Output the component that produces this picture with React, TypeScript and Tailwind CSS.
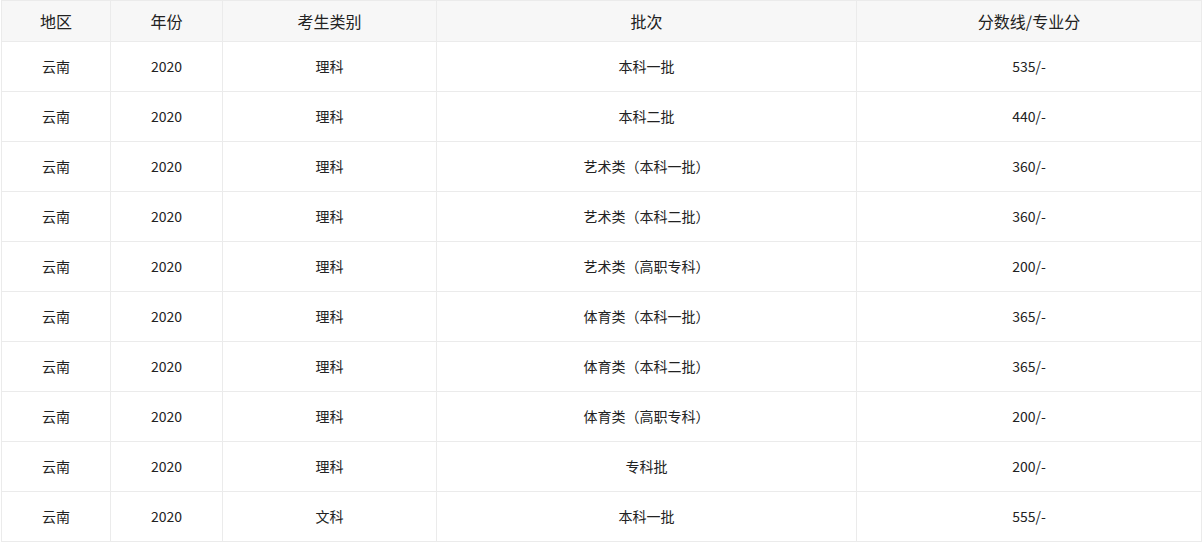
import React from "react";

interface Row {
  region: string;
  year: string;
  type: string;
  batch: string;
  score: string;
}

const rows: Row[] = [
  { region: "云南", year: "2020", type: "理科", batch: "本科一批", score: "535/-" },
  { region: "云南", year: "2020", type: "理科", batch: "本科二批", score: "440/-" },
  { region: "云南", year: "2020", type: "理科", batch: "艺术类（本科一批）", score: "360/-" },
  { region: "云南", year: "2020", type: "理科", batch: "艺术类（本科二批）", score: "360/-" },
  { region: "云南", year: "2020", type: "理科", batch: "艺术类（高职专科）", score: "200/-" },
  { region: "云南", year: "2020", type: "理科", batch: "体育类（本科一批）", score: "365/-" },
  { region: "云南", year: "2020", type: "理科", batch: "体育类（本科二批）", score: "365/-" },
  { region: "云南", year: "2020", type: "理科", batch: "体育类（高职专科）", score: "200/-" },
  { region: "云南", year: "2020", type: "理科", batch: "专科批", score: "200/-" },
  { region: "云南", year: "2020", type: "文科", batch: "本科一批", score: "555/-" },
];

const headers = ["地区", "年份", "考生类别", "批次", "分数线/专业分"];

export default function App() {
  return (
    <div
      className="w-[1204px] h-[546px] bg-white pl-[1px] text-[#222]"
      style={{ fontFamily: '"Noto Sans CJK SC", "Noto Sans", sans-serif' }}
    >
      <table className="w-[1200px] table-fixed border-collapse border border-[#ebebeb]">
        <colgroup>
          <col className="w-[109px]" />
          <col className="w-[112px]" />
          <col className="w-[214px]" />
          <col className="w-[420px]" />
          <col className="w-[345px]" />
        </colgroup>
        <thead>
          <tr className="h-[41px] bg-[#f7f7f7]">
            {headers.map((h) => (
              <th key={h} className="border border-[#ebebeb] text-[16px] font-normal text-center p-0">
                {h}
              </th>
            ))}
          </tr>
        </thead>
        <tbody>
          {rows.map((r, i) => (
            <tr key={i} className="h-[50px]">
              <td className="border border-[#ebebeb] text-[14px] text-center p-0">{r.region}</td>
              <td className="border border-[#ebebeb] text-[14px] text-center p-0">{r.year}</td>
              <td className="border border-[#ebebeb] text-[14px] text-center p-0">{r.type}</td>
              <td className="border border-[#ebebeb] text-[14px] text-center p-0">{r.batch}</td>
              <td className="border border-[#ebebeb] text-[14px] text-center p-0">{r.score}</td>
            </tr>
          ))}
        </tbody>
      </table>
    </div>
  );
}
